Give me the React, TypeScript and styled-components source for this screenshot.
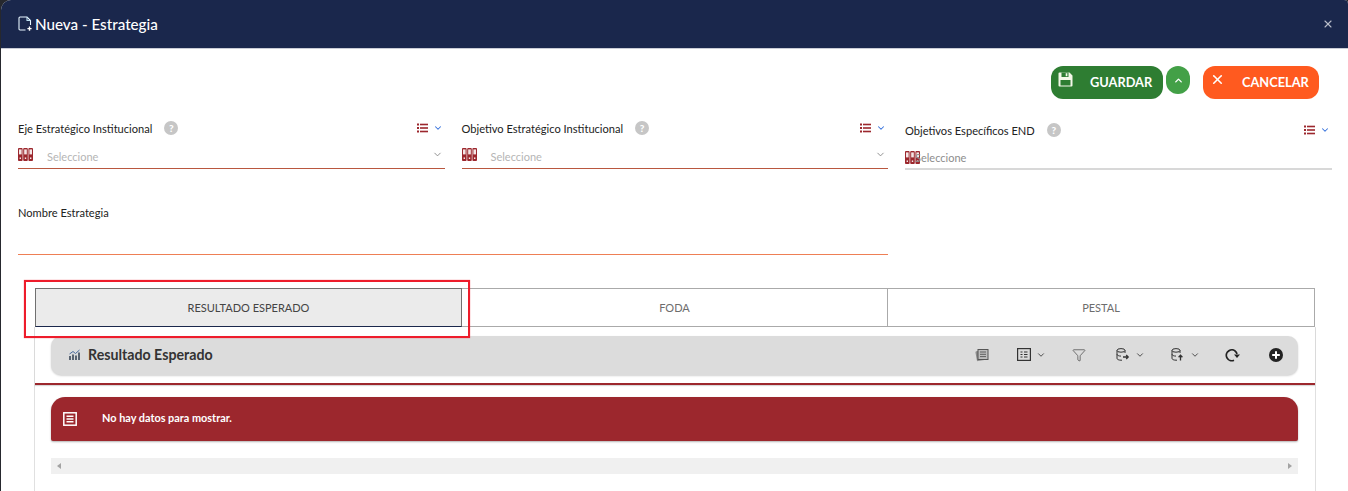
import React from "react";
import styled, { createGlobalStyle } from "styled-components";
import { ChevronDown, ChevronUp, X, Filter } from "lucide-react";

const GlobalStyle = createGlobalStyle`
  html, body { margin: 0; padding: 0; background: #fff; }
  body { font-family: "Lato", "Noto Sans", sans-serif; color: #222; }
  * { box-sizing: border-box; }
`;

const Page = styled.div`
  position: relative;
  width: 1348px;
  height: 491px;
  overflow: hidden;
  background: #26282e;
  padding-left: 1px;
`;

const Modal = styled.div`
  height: 100%;
  background: #fff;
  border-radius: 10px 4px 0 0;
  overflow: hidden;
`;

const Header = styled.div`
  height: 49px;
  background: #1a274c;
  border-bottom: 1px solid #c9ccd6;
  display: flex;
  align-items: center;
  justify-content: space-between;
  padding: 0 14px 1px 17px;
`;

const Title = styled.div`
  display: flex;
  align-items: center;
  gap: 2px;
  color: #fff;
  font-size: 15.2px;
  font-weight: 500;
`;

const CloseBtn = styled.span`
  display: flex;
  color: #b9bdc9;
`;

const Actions = styled.div`
  display: flex;
  align-items: flex-start;
  justify-content: flex-end;
  padding: 17px 29px 0 0;
  height: 69px;
`;

const ActionBtn = styled.div<{ $bg: string; $w: number; $gap: number }>`
  width: ${(p) => p.$w}px;
  height: 33px;
  border-radius: 12px;
  background: ${(p) => p.$bg};
  color: #fff;
  font-size: 12.8px;
  font-weight: 700;
  display: flex;
  align-items: center;
  gap: ${(p) => p.$gap}px;
  padding: 0 0 1px 7px;
  white-space: nowrap;
  svg { margin-top: -5px; flex-shrink: 0; }
`;

const CaretBtn = styled.div`
  width: 24px;
  height: 28px;
  margin: 0 13px 0 3px;
  border-radius: 12px;
  background: #43a047;
  color: #fff;
  display: flex;
  align-items: center;
  justify-content: center;
`;

const FieldGrid = styled.div`
  display: grid;
  grid-template-columns: repeat(3, 426.5px);
  column-gap: 17px;
  padding: 0 16px 0 17px;
`;

const Field = styled.div<{ $offset?: number }>`
  height: 53px;
  padding-top: ${(p) => p.$offset ?? 0}px;
`;

const LabelRow = styled.div`
  height: 20px;
  display: flex;
  align-items: center;
  padding-right: 2px;
`;

const Label = styled.span`
  font-size: 11.1px;
  color: #222;
  white-space: nowrap;
`;

const Help = styled.span`
  width: 14px;
  height: 14px;
  margin-left: 12px;
  border-radius: 50%;
  background: #c6c6c6;
  color: #fff;
  font-size: 10px;
  font-weight: 900;
  display: flex;
  align-items: center;
  justify-content: center;
`;

const ListMenu = styled.span`
  margin-left: auto;
  display: flex;
  align-items: center;
  gap: 5px;
  color: #3470dc;
`;

const InputRow = styled.div<{ $muted?: boolean }>`
  height: ${(p) => (p.$muted ? 30 : 31)}px;
  padding: ${(p) => (p.$muted ? "6px" : "7px")} 2px 0 0;
  display: flex;
  align-items: center;
  border-bottom: ${(p) => (p.$muted ? "2px solid #d8d8d8" : "1px solid #b9573f")};
  color: #888;
`;

const Binders = styled.svg<{ $raised?: boolean }>`
  flex-shrink: 0;
  margin-top: ${(p) => (p.$raised ? "-4px" : "0")};
`;

const Placeholder = styled.span<{ $overlap?: boolean }>`
  font-size: 11px;
  color: ${(p) => (p.$overlap ? "#8d8d8d" : "#b5b5b5")};
  margin-left: ${(p) => (p.$overlap ? "-5px" : "14px")};
  flex: 1;
`;

const NameField = styled.div`
  width: 870px;
  margin: 35px 0 0 17px;
`;

const NameLabel = styled.div`
  font-size: 11.1px;
  color: #222;
  height: 39px;
`;

const NameLine = styled.div`
  height: 10px;
  border-bottom: 1px solid #ee7f55;
`;

const Tabs = styled.div`
  display: grid;
  grid-template-columns: 427px 426px 427px;
  height: 39px;
  margin: 33px 33px 0 34px;
`;

const Tab = styled.div<{ $active?: boolean }>`
  display: flex;
  align-items: center;
  justify-content: center;
  font-size: 11px;
  color: ${(p) => (p.$active ? "#444" : "#6d6d6d")};
  background: ${(p) => (p.$active ? "#ebebeb" : "#fff")};
  border: 1px solid ${(p) => (p.$active ? "#707070" : "#aaa")};
  border-bottom-color: ${(p) => (p.$active ? "#1a274c" : "#aaa")};
  & + & { border-left: 0; }
`;

const Panel = styled.div`
  margin: 0 32px 0 33px;
  border-left: 1px solid #e0e0e0;
  border-right: 1px solid #e0e0e0;
  height: 170px;
`;

const GridHeaderWrap = styled.div`
  padding: 9px 17px 8px 16px;
  border-bottom: 2px solid #9c272d;
  box-shadow: 0 1px 1px rgba(0, 0, 0, 0.15);
`;

const GridHeader = styled.div`
  height: 39px;
  background: #dcdcdc;
  border-radius: 10px;
  box-shadow: 0 1px 2px rgba(0, 0, 0, 0.18);
  display: flex;
  align-items: center;
  padding: 0 15px 2px 18px;
`;

const GridTitle = styled.span`
  font-size: 14.2px;
  font-weight: 700;
  color: #333;
  margin-left: 7px;
`;

const ToolGroup = styled.div`
  margin-left: auto;
  display: flex;
  align-items: center;
  color: #333;
`;

const Tool = styled.span<{ $w: number }>`
  width: ${(p) => p.$w}px;
  display: flex;
  align-items: center;
  gap: 5px;
  color: #333;
`;

const Alert = styled.div`
  margin: 12px 17px 0 16px;
  height: 44px;
  background: #9c272d;
  border-radius: 14px 14px 2px 2px;
  box-shadow: 0 1px 2px rgba(0, 0, 0, 0.3);
  display: flex;
  align-items: center;
  padding-left: 12px;
  color: #fff;
  font-size: 10.9px;
  font-weight: 700;
`;

const AlertText = styled.span`
  margin: -3px 0 0 25px;
`;

const ScrollBar = styled.div`
  margin: 17px 17px 0 16px;
  height: 16px;
  background: #f0f0f0;
  display: flex;
  align-items: center;
  justify-content: space-between;
  padding: 0 6px;
`;

const Arrow = styled.span<{ $right?: boolean }>`
  width: 0;
  height: 0;
  border-top: 3.5px solid transparent;
  border-bottom: 3.5px solid transparent;
  ${(p) =>
    p.$right ? "border-left: 4px solid #a3a3a3;" : "border-right: 4px solid #a3a3a3;"}
`;

const Highlight = styled.div`
  position: absolute;
  left: 24px;
  top: 280px;
  width: 446px;
  height: 58px;
  border: 2px solid #ee1c2b;
  box-shadow: 0 0 1px rgba(238, 28, 43, 0.7);
  pointer-events: none;
`;

const ListIcon = () => (
  <svg width="11" height="10" viewBox="0 0 11 10">
    <g fill="#9c272d">
      <rect x="0" y="0.5" width="2" height="2" />
      <rect x="0" y="4" width="2" height="2" />
      <rect x="0" y="7.5" width="2" height="2" />
      <rect x="3" y="0.7" width="8" height="1.6" />
      <rect x="3" y="4.2" width="8" height="1.6" />
      <rect x="3" y="7.7" width="8" height="1.6" />
    </g>
  </svg>
);

const BindersIcon = ({ raised }: { raised?: boolean }) => (
  <Binders $raised={raised} width="15" height="13" viewBox="0 0 15 13">
    {[0, 5.2, 10.4].map((x) => (
      <g key={x}>
        <rect x={x} y="0" width="4.6" height="13" rx="0.9" fill="#9c272d" />
        <rect x={x + 1} y="1.4" width="2.6" height="5" fill="#f4e6e6" />
        <rect x={x + 1.6} y="9.5" width="1.4" height="1.4" fill="#fff" />
      </g>
    ))}
  </Binders>
);

const NewFileIcon = () => (
  <svg width="15" height="16" viewBox="0 0 15 16" fill="none" stroke="#fff" strokeWidth="1.1" style={{ marginTop: 1 }}>
    <path d="M7.5 14H2a1 1 0 0 1-1-1V2a1 1 0 0 1 1-1h7l3.5 3.5V9" stroke="#e8f6ff" />
    <path d="M9 1v3.5h3.5" stroke="#bfe3f5" />
    <path d="M11.5 10.5v4.2M9.4 12.6h4.2" strokeWidth="1.4" />
  </svg>
);

const SaveIcon = () => (
  <svg width="15" height="15" viewBox="0 0 15 15">
    <path d="M1.5 0.5h10l3 3v10a1 1 0 0 1-1 1h-12a1 1 0 0 1-1-1v-12a1 1 0 0 1 1-1z" fill="#f3f7e8" />
    <rect x="3.5" y="0.5" width="7" height="4.5" fill="#2e7d32" />
    <rect x="7.7" y="1.2" width="1.7" height="3" fill="#f3f7e8" />
    <rect x="2.5" y="8" width="10" height="5.5" fill="#2e7d32" />
  </svg>
);

const ChartIcon = () => (
  <svg width="12" height="11" viewBox="0 0 12 11" fill="#5a6472">
    <rect x="0" y="7" width="2" height="4" />
    <rect x="3" y="5.5" width="2" height="5.5" />
    <rect x="6" y="6.5" width="2" height="4.5" />
    <rect x="9" y="3.5" width="2" height="7.5" />
    <path d="M0.5 5L4 2.5l2.5 2L10.5 1" fill="none" stroke="#4a6a9c" strokeWidth="1" />
  </svg>
);

const NotesIcon = () => (
  <svg width="15" height="14" viewBox="0 0 15 14">
    <rect x="1" y="2.5" width="10" height="10" rx="1" transform="rotate(-10 6 7)" fill="#8d8d8d" />
    <rect x="3" y="1.5" width="10" height="10" fill="#bdbdbd" stroke="#555" strokeWidth="1" />
    <path d="M5 4h6M5 6.3h6M5 8.6h6" stroke="#555" strokeWidth="0.9" />
  </svg>
);

const TableIcon = () => (
  <svg width="14" height="13" viewBox="0 0 14 13" fill="none" stroke="#333">
    <rect x="0.6" y="0.6" width="12.8" height="11.8" strokeWidth="1.2" />
    <path d="M3.5 4h2M3.5 6.5h2M3.5 9h2M7 4h3.5M7 6.5h3.5M7 9h3.5" strokeWidth="1.1" />
  </svg>
);

const DbIcon = ({ up }: { up?: boolean }) => (
  <svg width="14" height="13" viewBox="0 0 14 13" fill="none" stroke="#333" strokeWidth="1">
    <ellipse cx="5" cy="2.4" rx="4" ry="1.8" />
    <path d="M1 2.4v8c0 1 1.8 1.8 4 1.8h1M9 2.4V5M1 6.3c0 1 1.8 1.8 4 1.8" />
    {up ? (
      <path d="M9.5 12.5V7.5M7.6 9.3l1.9-2 1.9 2" strokeWidth="1.3" />
    ) : (
      <path d="M7 9h5M10.2 7l2 2-2 2" strokeWidth="1.3" />
    )}
  </svg>
);

const RefreshIcon = () => (
  <svg width="15" height="14" viewBox="0 0 15 14" fill="none" stroke="#222" strokeWidth="1.8">
    <path d="M9 12.2A5.4 5.4 0 1 1 11.2 4.2L12 6" />
    <path d="M15 6.4H9L12 10z" fill="#222" stroke="none" />
  </svg>
);

const PlusIcon = () => (
  <svg width="14" height="14" viewBox="0 0 14 14">
    <circle cx="7" cy="7" r="7" fill="#222" />
    <path d="M7 3.2v7.6M3.2 7h7.6" stroke="#fff" strokeWidth="2" />
  </svg>
);

const AlertIcon = () => (
  <svg width="14" height="14" viewBox="0 0 14 14">
    <rect x="0.8" y="0.8" width="12.4" height="12.4" fill="none" stroke="#fff" strokeWidth="1.5" />
    <path d="M3.5 4.3h7M3.5 7h7M3.5 9.7h7" stroke="#fff" strokeWidth="1.5" />
  </svg>
);

const fields = [
  { label: "Eje Estratégico Institucional" },
  { label: "Objetivo Estratégico Institucional" },
  { label: "Objetivos Específicos END", plain: true },
];

export default function App() {
  return (
    <Page>
      <GlobalStyle />
      <Modal>
        <Header>
          <Title>
            <NewFileIcon />
            Nueva - Estrategia
          </Title>
          <CloseBtn>
            <X size={12} strokeWidth={2.2} />
          </CloseBtn>
        </Header>
        <Actions>
          <ActionBtn $bg="#2e7d32" $w={112} $gap={17}>
            <SaveIcon />
            GUARDAR
          </ActionBtn>
          <CaretBtn>
            <ChevronUp size={11} strokeWidth={3} />
          </CaretBtn>
          <ActionBtn $bg="#ff5a1f" $w={116} $gap={17}>
            <X size={15} strokeWidth={2.6} />
            CANCELAR
          </ActionBtn>
        </Actions>
        <FieldGrid>
          {fields.map((f) => (
            <Field key={f.label} $offset={f.plain ? 2 : 0}>
              <LabelRow>
                <Label>{f.label}</Label>
                <Help>?</Help>
                <ListMenu>
                  <ListIcon />
                  <ChevronDown size={10} strokeWidth={2.5} />
                </ListMenu>
              </LabelRow>
              <InputRow $muted={f.plain}>
                <BindersIcon raised={!f.plain} />
                <Placeholder $overlap={f.plain}>Seleccione</Placeholder>
                {!f.plain && <ChevronDown size={11} strokeWidth={2} style={{ marginTop: -4 }} />}
              </InputRow>
            </Field>
          ))}
        </FieldGrid>
        <NameField>
          <NameLabel>Nombre Estrategia</NameLabel>
          <NameLine />
        </NameField>
        <Tabs>
          <Tab $active>RESULTADO ESPERADO</Tab>
          <Tab>FODA</Tab>
          <Tab>PESTAL</Tab>
        </Tabs>
        <Panel>
          <GridHeaderWrap>
            <GridHeader>
              <ChartIcon />
              <GridTitle>Resultado Esperado</GridTitle>
              <ToolGroup>
                <Tool $w={42}>
                  <NotesIcon />
                </Tool>
                <Tool $w={55}>
                  <TableIcon />
                  <ChevronDown size={10} strokeWidth={2} />
                </Tool>
                <Tool $w={44}>
                  <Filter size={14} strokeWidth={1.1} />
                </Tool>
                <Tool $w={55}>
                  <DbIcon />
                  <ChevronDown size={10} strokeWidth={2} />
                </Tool>
                <Tool $w={54}>
                  <DbIcon up />
                  <ChevronDown size={10} strokeWidth={2} />
                </Tool>
                <Tool $w={44}>
                  <RefreshIcon />
                </Tool>
                <Tool $w={14}>
                  <PlusIcon />
                </Tool>
              </ToolGroup>
            </GridHeader>
          </GridHeaderWrap>
          <Alert>
            <AlertIcon />
            <AlertText>No hay datos para mostrar.</AlertText>
          </Alert>
          <ScrollBar>
            <Arrow />
            <Arrow $right />
          </ScrollBar>
        </Panel>
      </Modal>
      <Highlight />
    </Page>
  );
}
